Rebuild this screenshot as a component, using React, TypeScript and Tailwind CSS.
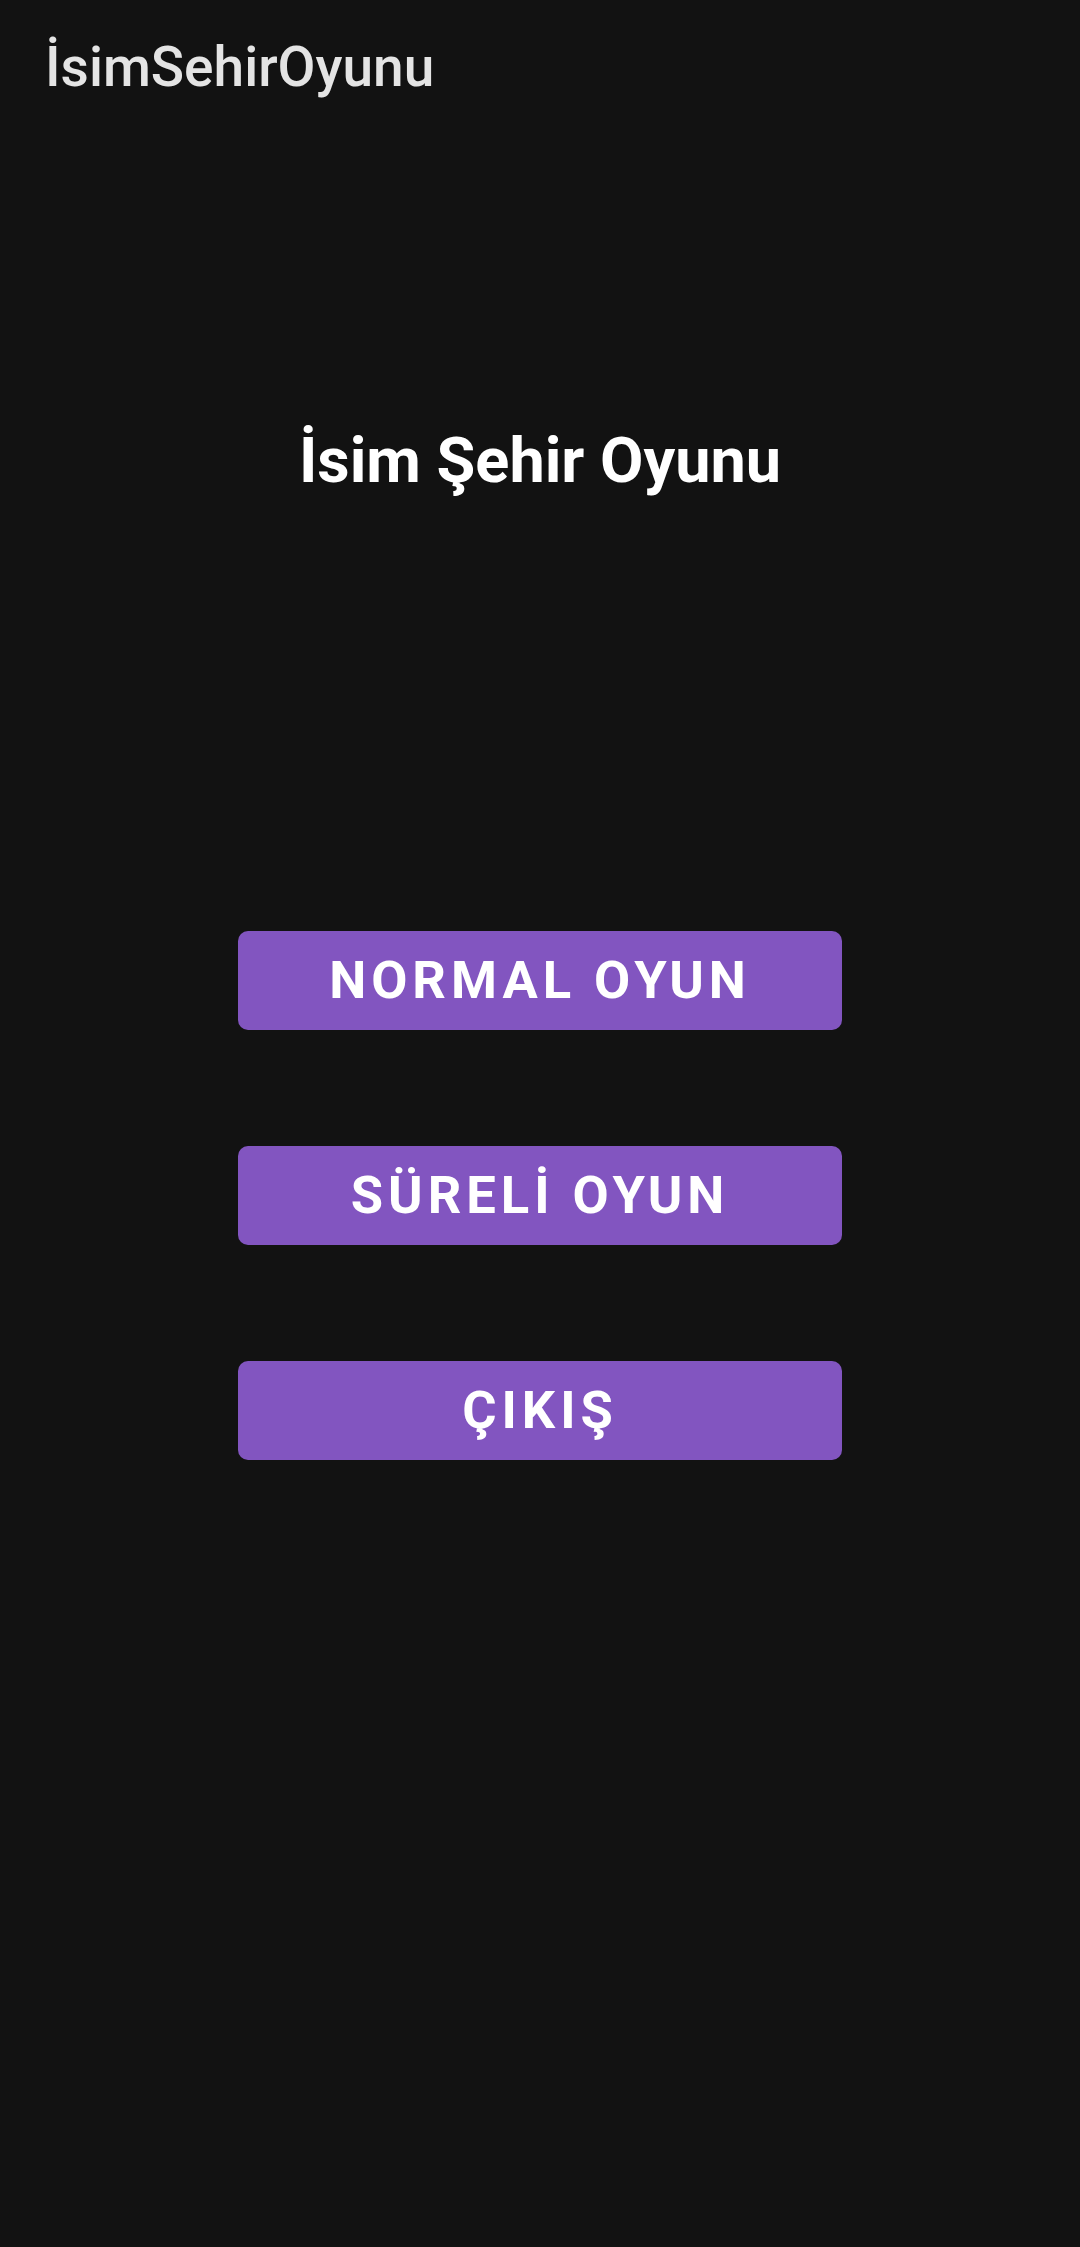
export default function App() {
  const buttons = ["NORMAL OYUN", "SÜRELİ OYUN", "ÇIKIŞ"]

  return (
    <div className="min-h-[2247px] w-full bg-[#121212] font-['Roboto','Liberation_Sans',sans-serif]">
      {/* App bar */}
      <div className="h-[147px] pl-[45px] pt-[37px]">
        <div className="text-[55px] leading-[60px] font-medium text-[#e4e4e4]">İsimSehirOyunu</div>
      </div>

      {/* Heading */}
      <div className="mt-[278px] text-center text-[63px] leading-[72px] font-bold text-white">
        İsim Şehir Oyunu
      </div>

      {/* Menu */}
      <div className="mt-[434px] flex flex-col items-center gap-[116px]">
        {buttons.map((label) => (
          <button
            key={label}
            className="flex h-[99px] w-[604px] items-center justify-center rounded-[10px] bg-[#8255c0] text-[52.5px] font-bold tracking-[0.095em] text-white"
          >
            {label}
          </button>
        ))}
      </div>
    </div>
  )
}
